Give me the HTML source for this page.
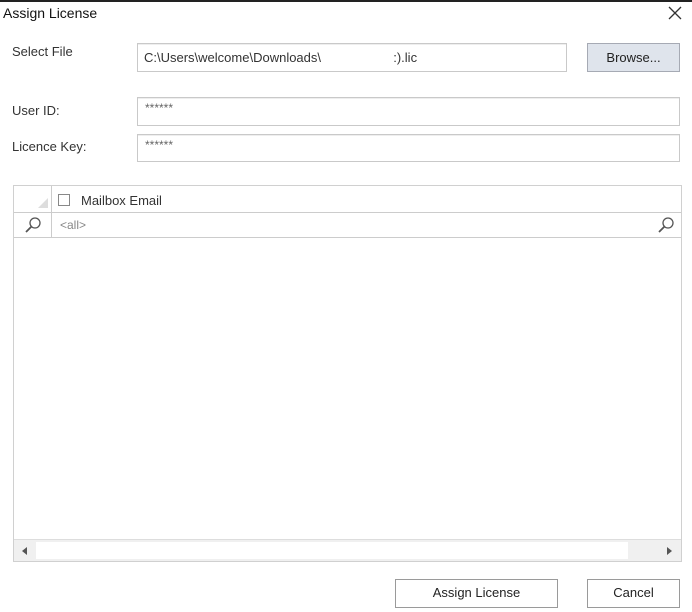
<!DOCTYPE html>
<html><head><style>
*{margin:0;padding:0;box-sizing:border-box}
body{width:692px;height:612px;background:#fff;font-family:"Liberation Sans",sans-serif;font-size:13px;color:#222;position:relative;overflow:hidden}
.a{position:absolute}
.in{position:absolute;border:1px solid #c9c9c9;background:#fff;box-shadow:inset 0 1px 0 #eee}
.lbl{position:absolute;font-size:13px;color:#333}
.btn{position:absolute;border:1px solid #9a9a9a;background:#fff;text-align:center;font-size:13px;line-height:26px;color:#222}
</style></head><body>
<div class="a" style="left:0;top:0;width:692px;height:2px;background:#222"></div>
<div class="a" style="left:3px;top:5px;font-size:14px;color:#111">Assign License</div>
<svg class="a" style="left:668px;top:6px" width="14" height="14"><path d="M1 1L13 13M13 1L1 13" stroke="#333" stroke-width="1.3"/></svg>
<div class="lbl" style="left:12px;top:44px">Select File</div>
<div class="in" style="left:137px;top:43px;width:430px;height:29px"><span class="a" style="left:6px;top:6px;color:#333">C:\Users\welcome\Downloads\ &nbsp; &nbsp; &nbsp; &nbsp; &nbsp; &nbsp; &nbsp; &nbsp; &nbsp; &nbsp;:).lic</span></div>
<div class="btn" style="left:587px;top:43px;width:93px;height:29px;background:#dfe4ec;border-color:#a6aab4;line-height:28px">Browse...</div>
<div class="lbl" style="left:12px;top:103px">User ID:</div>
<div class="in" style="left:137px;top:97px;width:543px;height:29px"><span class="a" style="left:7px;top:3px;font-size:12px;color:#666">******</span></div>
<div class="lbl" style="left:12px;top:139px">Licence Key:</div>
<div class="in" style="left:137px;top:134px;width:543px;height:28px"><span class="a" style="left:7px;top:3px;font-size:12px;color:#666">******</span></div>
<div class="a" style="left:13px;top:185px;width:669px;height:377px;border:1px solid #d0d0d0">
 <div class="a" style="left:0;top:0;width:38px;height:51px;border-right:1px solid #ccc"></div>
 <div class="a" style="left:0;top:26px;width:667px;height:1px;background:#ccc"></div>
 <div class="a" style="left:0;top:51px;width:667px;height:1px;background:#ccc"></div>
 <svg class="a" style="left:24px;top:12px" width="10" height="10"><path d="M10 0L10 10L0 10Z" fill="#ddd"/></svg>
 <div class="a" style="left:44px;top:8px;width:12px;height:12px;border:1px solid #888"></div>
 <div class="a" style="left:67px;top:7px;color:#333">Mailbox Email</div>
 <svg class="a" style="left:10px;top:30px" width="18" height="18"><circle cx="11" cy="7" r="5" fill="none" stroke="#555" stroke-width="1.3"/><path d="M7.5 10.5L2 16" stroke="#555" stroke-width="1.8"/></svg>
 <div class="a" style="left:46px;top:32px;font-size:12px;color:#888">&lt;all&gt;</div>
 <svg class="a" style="left:643px;top:30px" width="18" height="18"><circle cx="11" cy="7" r="5" fill="none" stroke="#555" stroke-width="1.3"/><path d="M7.5 10.5L2 16" stroke="#555" stroke-width="1.8"/></svg>
 <div class="a" style="left:0;top:353px;width:667px;height:22px;background:#f0f0f0;border-top:1px solid #ddd">
  <svg class="a" style="left:7px;top:6px" width="8" height="10"><path d="M6 1L1 5L6 9Z" fill="#555"/></svg>
  <div class="a" style="left:22px;top:2px;width:592px;height:17px;background:#fff"></div>
  <svg class="a" style="left:651px;top:6px" width="8" height="10"><path d="M2 1L7 5L2 9Z" fill="#555"/></svg>
 </div>
</div>
<div class="btn" style="left:395px;top:579px;width:163px;height:29px">Assign License</div>
<div class="btn" style="left:587px;top:579px;width:93px;height:29px">Cancel</div>
</body></html>
